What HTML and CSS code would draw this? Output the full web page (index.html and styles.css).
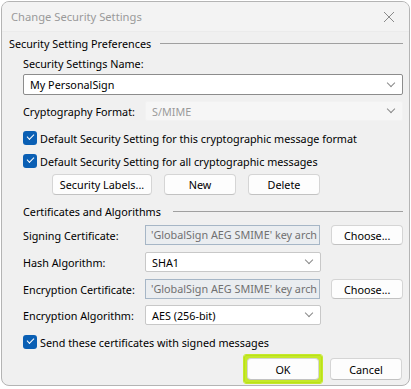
FILE: index.html
```html
<!DOCTYPE html>
<html lang="en">
<head>
<meta charset="utf-8">
<title>Change Security Settings</title>
<link rel="stylesheet" href="styles.css">
</head>
<body>
<div class="dialog">
	<div class="titlebar">
		<span class="title">Change Security Settings</span>
		<svg class="close" width="12" height="12" viewBox="0 0 12 12"><path d="M1 1L11 11M11 1L1 11" stroke="#8a8a8a" stroke-width="1" fill="none"/></svg>
	</div>
	<div class="content">
		<div class="group-head"><span>Security Setting Preferences</span><i></i></div>
		<div class="group">
			<div class="label-top">Security Settings Name:</div>
			<div class="combo combo-wide"><span>My PersonalSign</span><b class="chev"></b></div>
			<div class="row row-format">
				<span class="label">Cryptography Format:</span>
				<div class="combo combo-disabled"><span>S/MIME</span><b class="chev"></b></div>
			</div>
			<label class="check check-1"><span class="box"></span>Default Security Setting for this cryptographic message format</label>
			<label class="check check-2"><span class="box"></span>Default Security Setting for all cryptographic messages</label>
			<div class="btn-row">
				<button class="btn btn-labels">Security Labels...</button>
				<button class="btn">New</button>
				<button class="btn">Delete</button>
			</div>
		</div>
		<div class="group-head group-head-2"><span>Certificates and Algorithms</span><i></i></div>
		<div class="group">
			<div class="row">
				<span class="label">Signing Certificate:</span>
				<div class="certfield">'GlobalSign AEG SMIME' key arch</div>
				<button class="btn btn-choose">Choose...</button>
			</div>
			<div class="row row-hash">
				<span class="label">Hash Algorithm:</span>
				<div class="combo combo-mid"><span>SHA1</span><b class="chev"></b></div>
			</div>
			<div class="row row-enc">
				<span class="label">Encryption Certificate:</span>
				<div class="certfield">'GlobalSign AEG SMIME' key arch</div>
				<button class="btn btn-choose">Choose...</button>
			</div>
			<div class="row">
				<span class="label">Encryption Algorithm:</span>
				<div class="combo combo-mid"><span>AES (256-bit)</span><b class="chev"></b></div>
			</div>
			<label class="check check-3"><span class="box"></span>Send these certificates with signed messages</label>
		</div>
		<div class="footer">
			<div class="focus-ring"><button class="btn btn-ok">OK</button></div>
			<button class="btn btn-cancel">Cancel</button>
		</div>
	</div>
</div>
</body>
</html>
```

FILE: styles.css
```css
* {
	margin: 0;
	padding: 0;
	box-sizing: border-box;
}
body {
	background: #fff;
	font-family: "Noto Sans", "Open Sans", sans-serif;
	font-size: 10.8px;
	color: #000;
}
.dialog {
	width: 409px;
	height: 385px;
	margin: 1px 0 0 1px;
	border: 1px solid #b4b4b4;
	border-radius: 8px;
	overflow: hidden;
	background: #f0f0f0;
}
.titlebar {
	display: flex;
	align-items: center;
	justify-content: space-between;
	height: 30px;
	padding: 0 14px 0 9px;
	background: #f3f3f3;
	border-bottom: 1px solid #ebebeb;
}
.title {
	color: #9a9a9a;
	font-size: 11.2px;
}
.content {
	padding: 3px 6px 0 7px;
}
.group-head {
	display: flex;
	align-items: center;
	height: 16px;
	white-space: nowrap;
}
.group-head i {
	flex: 1;
	margin-left: 9px;
	border-top: 1px solid #a0a0a0;
}
.group-head-2 {
	padding-left: 14px;
	margin-top: 8px;
}
.group-head-2 i {
	margin-left: 12px;
}
.group {
	padding-left: 14px;
}
.label-top {
	margin-top: 5px;
	height: 16px;
	line-height: 16px;
}
.combo {
	display: flex;
	align-items: center;
	justify-content: space-between;
	height: 20px;
	padding: 0 8px 0 6px;
	background: #fff;
	border: 1px solid #c8c8c8;
	border-radius: 2px;
}
.combo-wide {
	margin-top: 2px;
	height: 21px;
	border-color: #8c8c8c;
}
.combo-disabled {
	flex: 1;
	background: #f6f6f6;
	border-color: #f2f2f2;
	color: #9a9a9a;
}
.combo-mid {
	width: 176px;
}
.chev {
	width: 6px;
	height: 6px;
	border-right: 1px solid #8a8a8a;
	border-bottom: 1px solid #8a8a8a;
	transform: rotate(45deg);
	margin-top: -4px;
}
.row {
	display: flex;
	align-items: center;
	height: 20px;
	margin-top: 6px;
	white-space: nowrap;
}
.row-format {
	margin-top: 6px;
}
.row-hash {
	margin-top: 7px;
}
.row-enc {
	margin-top: 7px;
}
.label {
	width: 122px;
	flex: none;
}
.certfield {
	width: 176px;
	height: 20px;
	padding: 0 0 0 5px;
	line-height: 18px;
	background: #eaedf0;
	border: 1px solid #a6b6c6;
	color: #707070;
	white-space: nowrap;
	overflow: hidden;
}
.check {
	display: flex;
	align-items: center;
	height: 14px;
	margin-top: 10px;
	white-space: nowrap;
}
.check-2 {
	margin-top: 9px;
}
.box {
	position: relative;
	width: 14px;
	height: 14px;
	margin-right: 3px;
	background: #0a5fb4;
	border-radius: 3px;
}
.box:after {
	content: "";
	position: absolute;
	left: 4px;
	top: 3px;
	width: 6px;
	height: 3px;
	border-left: 1.2px solid #fff;
	border-bottom: 1.2px solid #fff;
	transform: rotate(-45deg);
}
.btn-row {
	display: flex;
	gap: 12px;
	margin-top: 6px;
	padding-left: 29px;
}
.btn {
	height: 21px;
	width: 72px;
	font-family: inherit;
	font-size: 10.8px;
	color: #000;
	background: #fdfdfd;
	border: 1px solid #d5d5d5;
	border-bottom-color: #c2c2c2;
	border-radius: 4px;
}
.btn-labels {
	width: 100px;
}
.btn-choose {
	margin-left: 11px;
	height: 20px;
}
.check-3 {
	margin-top: 10px;
}
.footer {
	display: flex;
	justify-content: flex-end;
	align-items: center;
	gap: 8px;
	margin-top: 6px;
	padding-right: 1px;
}
.focus-ring {
	padding: 2px;
	border: 1px solid #b9e11a;
	outline: 1px solid #c6e92a;
	background: #c6e92a;
	border-radius: 2px;
}
.btn-ok,
.btn-cancel {
	height: 22px;
}
```
